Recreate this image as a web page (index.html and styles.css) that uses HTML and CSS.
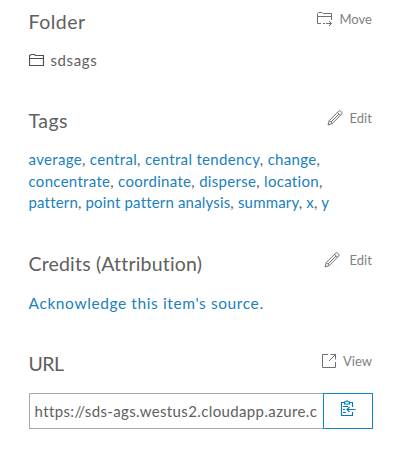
FILE: index.html
```html
<!DOCTYPE html>
<html lang="en">
<head>
<meta charset="utf-8">
<title>Item details</title>
<link rel="stylesheet" href="styles.css">
</head>
<body>
<main class="details">
  <section class="section folder">
    <header class="head">
      <h2 class="title title-folder">Folder</h2>
      <a class="action action-move"><svg class="icon" width="16" height="16" viewBox="0 0 16 16"><path d="M5 12.500H1.500V2.500L2.500 1.500H6L7 2.500H15.500V9M1.500 5.500H15.500M7 12.500H9M10 12.500H15.500M13 10L15.500 12.500L13 15"/></svg><span>Move</span></a>
    </header>
    <div class="body folder-name"><svg class="icon dark" width="16" height="14" viewBox="0 0 16 14"><path d="M.5 12.500V2.500L1.500 2L2.500 1.500H5.500L6.500 2.500H14.500V12.500ZM.5 5.500H14.500"/></svg><span>sdsags</span></div>
  </section>
  <section class="section tags">
    <header class="head">
      <h2 class="title title-tags">Tags</h2>
      <a class="action"><svg class="icon" width="16" height="16" viewBox="0 0 16 16"><path d="M1 15L2.300 10.500L11.800 1Q12.700.3 13.700 1.200L14.700 2.200Q15.500 3.100 14.700 4L5.300 13.500ZM2.300 10.500L5.300 13.500M10.500 2.300L13.500 5.300M4 12L12 4"/></svg><span>Edit</span></a>
    </header>
    <div class="body">
      <div class="line line-1"><a>average</a>, <a>central</a>, <a>central tendency</a>, <a>change</a>,</div>
      <div class="line line-2"><a>concentrate</a>, <a>coordinate</a>, <a>disperse</a>, <a>location</a>,</div>
      <div class="line line-3"><a>pattern</a>, <a>point pattern analysis</a>, <a>summary</a>, <a>x</a>, <a>y</a></div>
    </div>
  </section>
  <section class="section credits">
    <header class="head">
      <h2 class="title title-credits">Credits (Attribution)</h2>
      <a class="action"><svg class="icon" width="16" height="16" viewBox="0 0 16 16"><path d="M1 15L2.300 10.500L11.800 1Q12.700.3 13.700 1.200L14.700 2.200Q15.500 3.100 14.700 4L5.300 13.500ZM2.300 10.500L5.300 13.500M10.500 2.300L13.500 5.300M4 12L12 4"/></svg><span>Edit</span></a>
    </header>
    <div class="body"><a class="acknowledge">Acknowledge this item's source.</a></div>
  </section>
  <section class="section url">
    <header class="head">
      <h2 class="title title-url">URL</h2>
      <a class="action action-view"><svg class="icon" width="16" height="16" viewBox="0 0 16 16"><path d="M7 1.500H1.500V14.500H14.500V9M9.500 1.500H14.500V6.500M14.500 1.500L8 8"/></svg><span>View</span></a>
    </header>
    <div class="copy">
      <div class="field"><div class="value">https://sds-ags.westus2.cloudapp.azure.c</div></div>
      <button class="copy-button" aria-label="Copy"><svg class="icon" width="16" height="17" viewBox="0 0 16 17"><path d="M4 2.500H1.500V15.500H12.500V12M10 2.500H12.500V7M4.500 4V2L6 1.500Q7 .2 8 1.500L9.500 2V4ZM3 6.500H8M3 9.500H5M3 12.500H6M15.500 9.500H7M9.500 7L7 9.500L9.500 12"/></svg></button>
    </div>
  </section>
</main>
</body>
</html>
```
FILE: styles.css
```css
* { box-sizing: border-box; }
body {
  margin: 0;
  background: #fff;
  color: #606060;
  font: 15px/21.5px Lato, "Liberation Sans", sans-serif;
}
.details { width: 344px; margin-left: 28.5px; }
.section { padding-top: 9px; }
.folder { height: 99px; }
.tags { height: 143px; }
.credits { height: 100px; }
.url { height: 116px; }
.head { display: flex; justify-content: space-between; height: 24px; padding-right: 0.6px; white-space: nowrap; }
.title { margin: 0; font-size: 19.5px; font-weight: 400; line-height: 26px; }
.title-folder, .title-tags { letter-spacing: 0.5px; }
.title-credits { letter-spacing: 0.18px; }
.title-url { letter-spacing: -0.5px; }
.action {
  display: flex;
  align-items: center;
  gap: 7px;
  height: 20px;
  color: #808080;
  font-size: 13px;
  line-height: 20px;
}
.credits .action { gap: 10px; margin-top: -1px; }
.action-view { gap: 6px; }
.icon { flex: none; fill: none; stroke: #707070; stroke-width: 1; }
.dark { stroke: #505050; stroke-width: 1.15; }
.body { margin-top: 16.5px; white-space: nowrap; }
.tags .body { margin-top: 17px; }
.credits .body { margin-top: 17.5px; }
.body a { color: #2080bd; }
.line-1 { letter-spacing: 0.33px; }
.line-2 { letter-spacing: 0.3px; }
.line-3 { letter-spacing: 0.17px; }
.body .acknowledge { font-size: 15.5px; letter-spacing: 0.6px; }
.folder-name { display: flex; align-items: center; gap: 6px; letter-spacing: 0.6px; }
.copy { display: flex; height: 36px; margin-top: 18px; }
.field { width: 294px; padding: 0 3px 0 5px; border: 1px solid #a9a9a9; border-right: 0; }
.value { overflow: hidden; line-height: 35px; letter-spacing: 0.37px; white-space: nowrap; }
.copy-button {
  display: flex;
  justify-content: center;
  width: 50px;
  padding: 6px 0 0;
  border: 1px solid #1585c9;
  background: #fff;
}
.copy-button .icon { stroke: #0079c1; stroke-width: 1.15; }
```
